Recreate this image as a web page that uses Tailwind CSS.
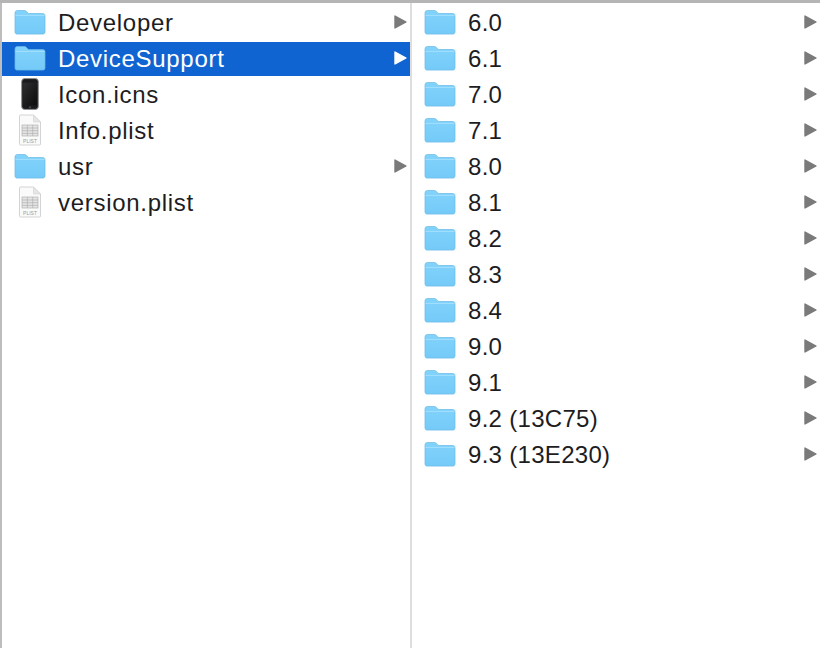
<!DOCTYPE html>
<html lang="en">
<head>
  <meta charset="UTF-8">
  <title>Finder columns</title>
  <script src="https://cdn.jsdelivr.net/npm/@tailwindcss/browser@4"></script>
</head>
<body class="bg-white">
  <!-- shared icons -->
  <svg class="absolute w-0 h-0">
    <defs>
      <linearGradient id="folderFill" x1="0" y1="0" x2="0" y2="1">
        <stop offset="0" stop-color="#82d3fb"/>
        <stop offset="1" stop-color="#74caf8"/>
      </linearGradient>
      <linearGradient id="screenFill" x1="0" y1="0" x2="1" y2="1">
        <stop offset="0" stop-color="#2f2f31"/>
        <stop offset="1" stop-color="#0c0c0d"/>
      </linearGradient>
    </defs>
    <symbol id="folder" viewBox="0 0 32 26">
      <path d="M1 4.2C1 2.4 1.8 1.5 3.4 1.5h6.8c1.2 0 1.8.4 2.5 1.2l.9 1.1c.4.5.8.7 1.5.7h13.6c1.6 0 2.3.9 2.3 2.4v15.9c0 1.5-.8 2.3-2.3 2.3H3.3c-1.5 0-2.3-.8-2.3-2.3z" fill="url(#folderFill)" stroke="#69b9e6" stroke-width=".7"/>
      <path d="M1.4 6.4h29.2" stroke="#a4e0fc" stroke-width="1"/>
    </symbol>
    <symbol id="phone" viewBox="0 0 18 32">
      <rect x="0.7" y="0.6" width="16.6" height="30.8" rx="3" fill="#1a1a1c" stroke="#8f8f92" stroke-width="1"/>
      <rect x="2.2" y="4.6" width="13.6" height="22.6" fill="url(#screenFill)"/>
      <circle cx="9" cy="29.3" r="1.1" fill="#4a4a4c"/>
    </symbol>
    <symbol id="arrow" viewBox="0 0 13 14">
      <path d="M1 1 12 7 1 13z" fill="currentColor" stroke="currentColor" stroke-width="1.4" stroke-linejoin="round"/>
    </symbol>
  </svg>

  <div class="h-[648px] w-[820px] overflow-hidden flex flex-col font-['Liberation_Sans',sans-serif] text-[24px] text-[#1d1d1f]">
    <div class="h-[3px] shrink-0 bg-[#b5b5b5]"></div>
    <div class="flex flex-1 min-h-0">

      <!-- first column -->
      <div class="w-[412px] shrink-0 pt-[3px] flex flex-col gap-[2px] tracking-[0.7px] border-l-2 border-r-2 border-l-[#bdbdbd] border-r-[#dedede]">
        <div class="h-[34px] flex items-center">
          <svg class="w-[32px] h-[26px] ml-[12px] -mt-[2px] shrink-0"><use href="#folder"/></svg>
          <span class="ml-[12px] flex-1">Developer</span>
          <svg class="w-[13px] h-[14px] mr-[3px] -mt-[2px] text-[#7a7a7a]"><use href="#arrow"/></svg>
        </div>
        <div class="h-[34px] flex items-center bg-[#0f64d2] text-white">
          <svg class="w-[32px] h-[26px] ml-[12px] -mt-[2px] shrink-0"><use href="#folder"/></svg>
          <span class="ml-[12px] flex-1">DeviceSupport</span>
          <svg class="w-[13px] h-[14px] mr-[3px] -mt-[2px] text-white"><use href="#arrow"/></svg>
        </div>
        <div class="h-[34px] flex items-center">
          <svg class="w-[18px] h-[32px] ml-[19px] -mt-[2px] shrink-0"><use href="#phone"/></svg>
          <span class="ml-[19px] flex-1">Icon.icns</span>
        </div>
        <div class="h-[34px] flex items-center">
          <svg class="w-[26px] h-[32px] ml-[15px] -mt-[2px] shrink-0" viewBox="0 0 26 32">
            <path d="M3.5 1h13l7 7v22a1 1 0 0 1-1 1h-19a1 1 0 0 1-1-1V2a1 1 0 0 1 1-1z" fill="#fafafa" stroke="#d4d4d4"/>
            <path d="M16.5 1v7h7z" fill="#e6e6e6" stroke="#d4d4d4" stroke-width=".7"/>
            <rect x="5" y="11" width="16" height="11" fill="#e4e4e4" stroke="#a9a9a9" stroke-width=".6"/>
            <path d="M5 14h16M5 16.7h16M5 19.4h16M10.4 11v11M15.7 11v11" stroke="#a9a9a9" stroke-width=".6"/>
            <text x="13" y="28.5" text-anchor="middle" font-family="Liberation Sans, sans-serif" font-size="5" letter-spacing="0" fill="#9a9a9a">PLIST</text>
          </svg>
          <span class="ml-[15px] flex-1">Info.plist</span>
        </div>
        <div class="h-[34px] flex items-center">
          <svg class="w-[32px] h-[26px] ml-[12px] -mt-[2px] shrink-0"><use href="#folder"/></svg>
          <span class="ml-[12px] flex-1">usr</span>
          <svg class="w-[13px] h-[14px] mr-[3px] -mt-[2px] text-[#7a7a7a]"><use href="#arrow"/></svg>
        </div>
        <div class="h-[34px] flex items-center">
          <svg class="w-[26px] h-[32px] ml-[15px] -mt-[2px] shrink-0" viewBox="0 0 26 32">
            <path d="M3.5 1h13l7 7v22a1 1 0 0 1-1 1h-19a1 1 0 0 1-1-1V2a1 1 0 0 1 1-1z" fill="#fafafa" stroke="#d4d4d4"/>
            <path d="M16.5 1v7h7z" fill="#e6e6e6" stroke="#d4d4d4" stroke-width=".7"/>
            <rect x="5" y="11" width="16" height="11" fill="#e4e4e4" stroke="#a9a9a9" stroke-width=".6"/>
            <path d="M5 14h16M5 16.7h16M5 19.4h16M10.4 11v11M15.7 11v11" stroke="#a9a9a9" stroke-width=".6"/>
            <text x="13" y="28.5" text-anchor="middle" font-family="Liberation Sans, sans-serif" font-size="5" letter-spacing="0" fill="#9a9a9a">PLIST</text>
          </svg>
          <span class="ml-[15px] flex-1">version.plist</span>
        </div>
      </div>

      <!-- second column -->
      <div id="versions" class="flex-1 min-w-0 pt-[3px] flex flex-col gap-[2px] tracking-[0.3px]"></div>
    </div>
  </div>

  <script>
    const versions = ['6.0', '6.1', '7.0', '7.1', '8.0', '8.1', '8.2', '8.3', '8.4', '9.0', '9.1', '9.2 (13C75)', '9.3 (13E230)'];
    const list = document.getElementById('versions');

    versions.forEach((name) => {
      const row = document.createElement('div');
      row.className = 'h-[34px] flex items-center';
      row.innerHTML = `
        <svg class="w-[32px] h-[26px] ml-[12px] -mt-[2px] shrink-0"><use href="#folder"/></svg>
        <span class="ml-[12px] flex-1">${name}</span>
        <svg class="w-[13px] h-[14px] mr-[3px] -mt-[2px] text-[#7a7a7a]"><use href="#arrow"/></svg>`;
      list.appendChild(row);
    });
  </script>
</body>
</html>
